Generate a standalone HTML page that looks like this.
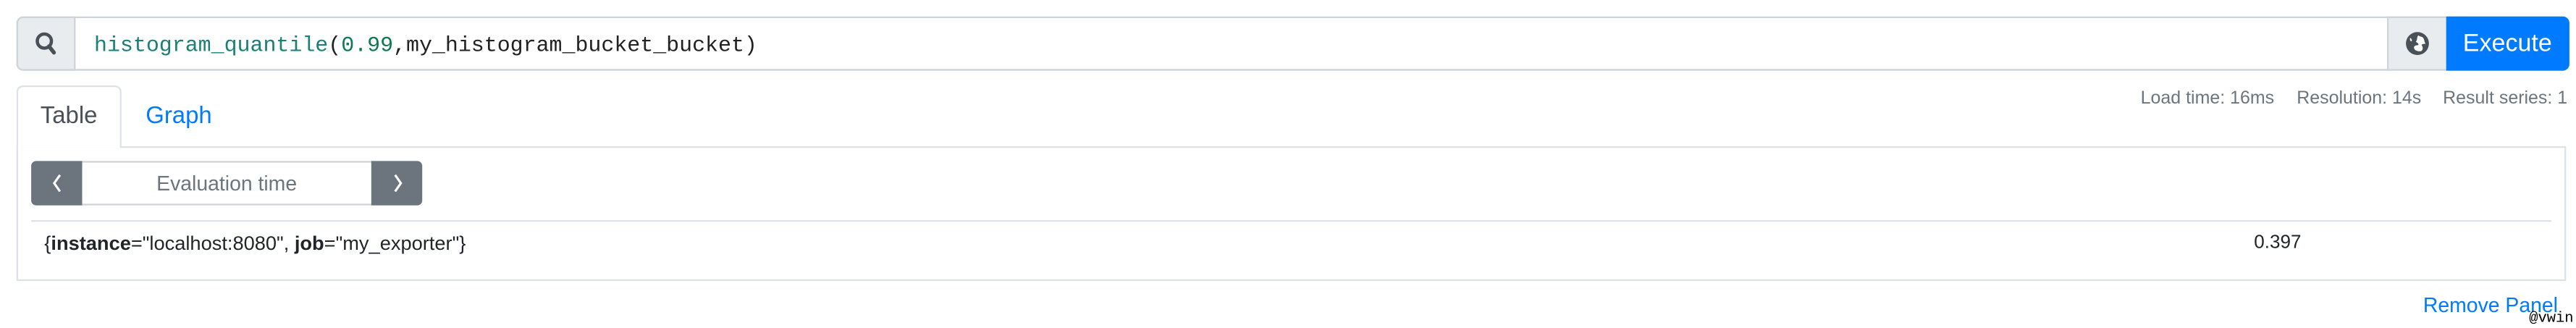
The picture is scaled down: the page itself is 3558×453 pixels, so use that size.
<!DOCTYPE html>
<html><head><meta charset="utf-8"><style>
html,body{margin:0;padding:0;background:#fff;width:3558px;height:448px;overflow:hidden}
#w{position:absolute;left:0;top:0;width:1568px;height:197.4px;transform:scale(2.2691);transform-origin:0 0;font-family:"Liberation Sans",sans-serif}
.a{position:absolute;box-sizing:border-box}
</style></head><body><div id="w">
<!-- input group -->
<div class="a" style="left:10px;top:10px;width:1554px;height:33px;border:1px solid #ced4da;border-radius:4px"></div>
<div class="a" style="left:10px;top:10px;width:36.3px;height:33px;background:#e9ecef;border:1px solid #ced4da;border-radius:4px 0 0 4px"></div>
<svg class="a" style="left:21px;top:19px" width="14" height="15" viewBox="0 0 14 15"><circle cx="6" cy="6" r="4.3" fill="none" stroke="#495057" stroke-width="2"/><path d="M8.8 9.2 L11.8 13" stroke="#495057" stroke-width="2.4" stroke-linecap="round"/></svg>
<div class="a" style="left:57.3px;top:18px;font:13.2px 'Liberation Mono',monospace;line-height:20px;white-space:nowrap;color:#222"><span style="color:#1b7f74">histogram_quantile</span>(<span style="color:#0a7a50">0.99</span>,my_histogram_bucket_bucket)</div>
<div class="a" style="left:1452.6px;top:10px;width:36.5px;height:33px;background:#e9ecef;border:1px solid #ced4da;border-right:0"></div>
<svg class="a" style="left:1464px;top:19.3px" width="15" height="15" viewBox="0 0 15 15"><circle cx="7.5" cy="7.5" r="7" fill="#495057"/><path d="M8 2.5 C9 3.5 10 3 11 4 C12 5.5 11.5 6.5 12.5 7.5 C11 8 10.5 7.5 10 8.5 C11 9.5 11 11 10 12 C8.5 12.5 6 12 5.5 10.5 C5 9 6.5 8.5 8 8.5 C8.5 7.5 7.5 7 6.5 6.5 C7.5 5.5 7 4 8 2.5Z" fill="#fff"/><path d="M3 4 C4 4.5 4.5 5.5 3.8 6.2 C3 6 2.8 5 3 4Z" fill="#fff"/></svg>
<div class="a" style="left:1488.8px;top:10px;width:75px;height:33px;background:#007bff;border-radius:0 4px 4px 0;color:#fff;font-size:15px;line-height:33px;text-align:center">Execute</div>
<!-- stats -->
<div class="a" style="left:1303px;top:53px;font-size:11px;color:#6c757d;white-space:nowrap;line-height:14px">Load time: 16ms</div>
<div class="a" style="left:1398px;top:53px;font-size:11px;color:#6c757d;white-space:nowrap;line-height:14px">Resolution: 14s</div>
<div class="a" style="left:1487px;top:53px;font-size:11px;color:#6c757d;white-space:nowrap;line-height:14px">Result series: 1</div>
<!-- tabs -->
<div class="a" style="left:10px;top:88.6px;width:1552px;height:82.5px;border:1px solid #dee2e6"></div>
<div class="a" style="left:10px;top:52px;width:63.5px;height:37.6px;background:#fff;border:1px solid #dee2e6;border-bottom:0;border-radius:4px 4px 0 0"></div>
<div class="a" style="left:24.6px;top:62px;font-size:14.5px;color:#495057;line-height:18px">Table</div>
<div class="a" style="left:88.7px;top:62px;font-size:14.5px;color:#007bff;line-height:18px">Graph</div>
<!-- eval time -->
<div class="a" style="left:19.2px;top:97.7px;width:238px;height:27.5px;border:1px solid #ced4da;border-radius:3px"></div>
<div class="a" style="left:19.2px;top:97.7px;width:31px;height:27.5px;background:#6c757d;border-radius:3px 0 0 3px"></div>
<div class="a" style="left:226.2px;top:97.7px;width:31px;height:27.5px;background:#6c757d;border-radius:0 3px 3px 0"></div>
<svg class="a" style="left:30px;top:105px" width="10" height="13" viewBox="0 0 10 13"><path d="M6.5 1.5 L3 6.5 L6.5 11.5" fill="none" stroke="#fff" stroke-width="1.4"/></svg>
<svg class="a" style="left:237px;top:105px" width="10" height="13" viewBox="0 0 10 13"><path d="M3.5 1.5 L7 6.5 L3.5 11.5" fill="none" stroke="#fff" stroke-width="1.4"/></svg>
<div class="a" style="left:50px;top:104px;width:176px;text-align:center;font-size:12.5px;color:#6c757d;line-height:16px">Evaluation time</div>
<!-- table -->
<div class="a" style="left:19.2px;top:133.5px;width:1534px;height:1px;background:#dee2e6"></div>
<div class="a" style="left:27px;top:140.5px;font-size:12px;color:#212529;white-space:nowrap;line-height:15px">{<b>instance</b>="localhost:8080", <b>job</b>="my_exporter"}</div>
<div class="a" style="left:1372px;top:140.5px;font-size:11.5px;color:#212529;line-height:15px">0.397</div>
<div class="a" style="left:1475px;top:178px;font-size:12.5px;color:#007bff;white-space:nowrap;line-height:16px">Remove Panel</div>
<div class="a" style="left:1539.5px;top:188.5px;font:9px 'Liberation Mono',monospace;color:#000;line-height:11px">@vwin</div>
</div></body></html>
